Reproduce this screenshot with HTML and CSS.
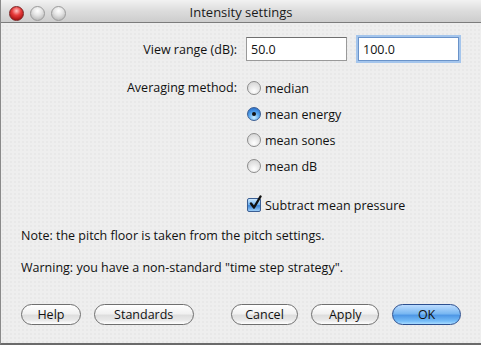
FILE: index.html
```html
<!DOCTYPE html>
<html lang="en">
<head>
    <meta charset="UTF-8">
    <meta name="viewport" content="width=device-width, initial-scale=1.0">
    <title>Intensity settings</title>
    <link rel="stylesheet" href="styles.css">
</head>
<body>
    <div class="window">
        <!-- Title bar -->
        <div class="titlebar">
            <div class="lights">
                <span class="light close"></span>
                <span class="light"></span>
                <span class="light"></span>
            </div>
            <div class="title">Intensity settings</div>
        </div>

        <!-- Dialog content -->
        <div class="content">
            <div class="form-row range-row">
                <label class="field-label">View range (dB):</label>
                <div class="fields">
                    <input class="text-field" type="text" value="50.0">
                    <input class="text-field focused" type="text" value="100.0">
                </div>
            </div>

            <div class="form-row method-row">
                <label class="field-label">Averaging method:</label>
                <div class="radio-list">
                    <div class="radio-item"><span class="radio"></span>median</div>
                    <div class="radio-item"><span class="radio checked"></span>mean energy</div>
                    <div class="radio-item"><span class="radio"></span>mean sones</div>
                    <div class="radio-item"><span class="radio"></span>mean dB</div>
                </div>
            </div>

            <div class="form-row check-row">
                <span></span>
                <div class="check-item">
                    <span class="checkbox">
                        <svg width="14" height="16" viewBox="0 0 14 16">
                            <path d="M3 8.5 L6 12.5 L12.5 1.5" fill="none" stroke="#111" stroke-width="2.4" stroke-linecap="round" stroke-linejoin="round"/>
                        </svg>
                    </span>
                    Subtract mean pressure
                </div>
            </div>

            <p class="note first">Note: the pitch floor is taken from the pitch settings.</p>
            <p class="note">Warning: you have a non-standard "time step strategy".</p>

            <div class="buttons">
                <button class="btn help">Help</button>
                <button class="btn standards">Standards</button>
                <button class="btn cancel">Cancel</button>
                <button class="btn apply">Apply</button>
                <button class="btn ok">OK</button>
            </div>
        </div>
    </div>
</body>
</html>
```

FILE: styles.css
```css
/* Page */
body {
    margin: 0;
    background: #ececec;
    font-family: "Open Sans", "DejaVu Sans", sans-serif;
    font-size: 12.5px;
    color: #111;
}

.window {
    width: 481px;
    height: 345px;
    box-sizing: border-box;
    display: flex;
    flex-direction: column;
    border-left: 1px solid #8a8a8a;
    border-bottom: 2px solid #6a6a6a;
    background-color: #eeeeee;
    background-image: radial-gradient(circle, #e0e0e0 0.6px, transparent 0.8px);
    background-size: 4px 4px;
}

/* Title bar */
.titlebar {
    height: 22px;
    flex: none;
    display: flex;
    align-items: center;
    position: relative;
    background: linear-gradient(#f2f2f2, #dcdcdc 50%, #cdcdcd);
    border-bottom: 1px solid #7c7c7c;
}

.lights {
    display: flex;
    gap: 6px;
    margin-left: 8px;
    margin-top: 4px;
}

.light {
    flex: none;
    width: 15px;
    height: 15px;
    box-sizing: border-box;
    border-radius: 50%;
    border: 1px solid #9b9b9b;
    background: radial-gradient(circle at 50% 30%, #ffffff, #e4e4e4 40%, #bcbcbc 80%, #d8d8d8);
}

.light.close {
    border-color: #7d2424;
    background: radial-gradient(circle at 50% 30%, #ffc4c4, #e83c3c 40%, #a81212 80%, #d84848);
}

.title {
    position: absolute;
    left: 0;
    right: 0;
    top: 3px;
    text-align: center;
    font-size: 13px;
    color: #1a1a1a;
}

/* Content */
.content {
    flex: 1;
    padding: 0 20px 0 20px;
    display: flex;
    flex-direction: column;
}

.form-row {
    display: grid;
    grid-template-columns: 216px 1fr;
    column-gap: 9px;
}

.field-label {
    text-align: right;
}

.range-row {
    margin-top: 14px;
    align-items: center;
}

.fields {
    display: flex;
    gap: 11px;
}

.text-field {
    width: 101px;
    height: 24px;
    box-sizing: border-box;
    border: 1px solid #9a9a9a;
    border-top-color: #6f6f6f;
    padding: 1px 4px 0;
    font-family: inherit;
    font-size: 12.5px;
    color: #111;
    background: #fff;
    outline: none;
}

.text-field.focused {
    border-color: #6a93c9;
    box-shadow: 0 0 0 2px #a4c5ec;
}

/* Radio buttons */
.method-row {
    margin-top: 14px;
}

.method-row .field-label {
    line-height: 26px;
}

.radio-item {
    height: 26px;
    display: flex;
    align-items: center;
    gap: 4px;
}

.radio {
    flex: none;
    width: 14px;
    height: 14px;
    box-sizing: border-box;
    border-radius: 50%;
    border: 1px solid #8c8c8c;
    background: radial-gradient(circle at 50% 75%, #ffffff, #e6e6e6 50%, #cfcfcf);
    margin-left: 1px;
    display: flex;
    align-items: center;
    justify-content: center;
}

.radio.checked {
    border-color: #3b5e93;
    background: radial-gradient(circle at 50% 80%, #c9ecff, #5aa8ee 45%, #2f77cf 80%, #3f6fb8);
}

.radio.checked::after {
    content: "";
    width: 4px;
    height: 4px;
    border-radius: 50%;
    background: #111;
}

/* Checkbox */
.check-row {
    margin-top: 13px;
}

.check-item {
    height: 26px;
    display: flex;
    align-items: center;
    gap: 4px;
}

.checkbox {
    flex: none;
    width: 14px;
    height: 14px;
    box-sizing: border-box;
    margin-left: 1px;
    border: 1px solid #3b5e93;
    border-radius: 2px;
    background: linear-gradient(#cde9ff, #6bb0ef 50%, #3c86d8 55%, #9ccdf7);
    position: relative;
}

.checkbox svg {
    position: absolute;
    left: 0;
    top: -4px;
}

/* Notes */
.note {
    margin: 0;
    line-height: 18px;
}

.note.first {
    margin-top: 9px;
}

.note + .note {
    margin-top: 14px;
}

/* Buttons */
.buttons {
    margin-top: 27px;
    display: flex;
    gap: 13px;
}

.btn {
    height: 21px;
    box-sizing: border-box;
    border: 1px solid #6f6f6f;
    border-radius: 11px;
    padding: 0;
    font-family: inherit;
    font-size: 12.5px;
    color: #111;
    background: linear-gradient(#ffffff, #f1f1f1 45%, #dedede 55%, #e9e9e9 80%, #ffffff);
}

.btn.help { width: 60px; }
.btn.standards { width: 100px; }
.btn.cancel { width: 68px; margin-left: 24px; }
.btn.apply { width: 68px; }
.btn.ok {
    width: 69px;
    border-color: #2c4f8f;
    background: linear-gradient(#bcdcff, #7ab8f2 45%, #4f98e6 55%, #76bdf8 85%, #a9dcff);
}
```
